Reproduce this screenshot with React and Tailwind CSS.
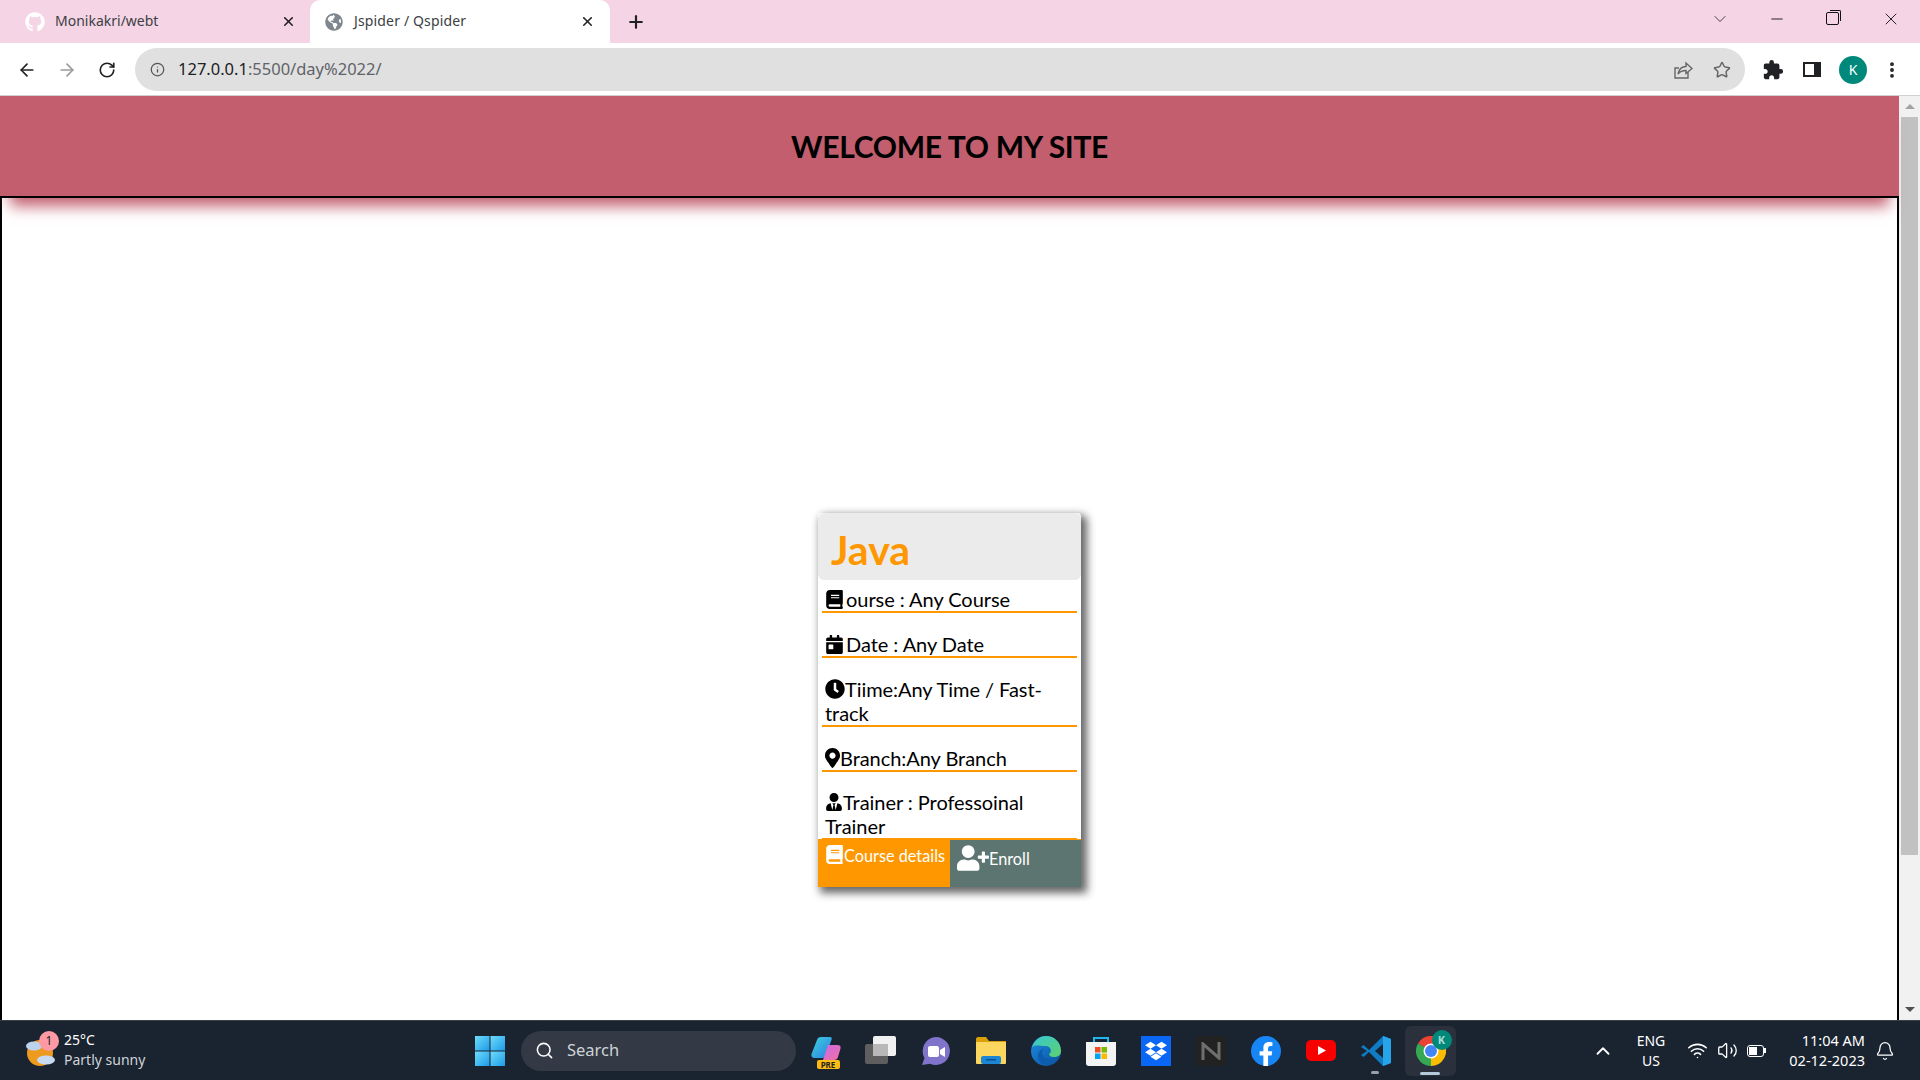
import React from 'react';
import { ArrowLeft, ArrowRight, RotateCw, Info, Star, X, Plus, Minus, ChevronDown, ChevronUp, Search, Wifi, Volume2, Bell, EllipsisVertical } from 'lucide-react';
import { FaGithub, FaGlobeAmericas, FaBook, FaCalendarDay, FaClock, FaMapMarkerAlt, FaUserTie, FaUserPlus, FaDropbox, FaFacebookF } from 'react-icons/fa';
import { MdExtension } from 'react-icons/md';

const Tab = ({ active, icon, title }) => (
  <div className={`flex items-center h-[43px] ${active ? 'w-[300px] bg-white rounded-t-[10px] pl-[15px] pr-[15px]' : 'w-[310px] pl-[25px] pr-[14px]'}`}>
    {icon}
    <span className={`mb-[2px] flex-1 text-[14px] text-[#3c4043] font-['Noto_Sans',sans-serif] ${active ? 'ml-[11px] tracking-[0.15px]' : 'ml-[10px]'}`}>{title}</span>
    <X size={15} strokeWidth={2.6} className="text-[#222]" />
  </div>
);

const TabStrip = () => (
  <div className="flex items-center h-[43px] bg-[#f5d5e5]">
    <Tab title="Monikakri/webt" icon={<FaGithub size={20} className="text-white" />} />
    <Tab active title="Jspider / Qspider" icon={<FaGlobeAmericas size={18} className="text-[#7f868f]" />} />
    <Plus size={20} strokeWidth={2.6} className="ml-[16px] text-[#222]" />
    <div className="flex-1" />
    <div className="flex items-center mb-[6px]">
      <ChevronDown size={20} strokeWidth={1} className="text-[#222] mr-[38px]" />
      <Minus size={18} strokeWidth={1.2} className="text-[#111] mr-[40px]" />
      <div className="relative w-[13px] h-[13px] mr-[42px] border border-[#111] rounded-[2px]">
        <div className="absolute -top-[3px] -right-[3px] w-[11px] h-[11px] border-t border-r border-[#111] rounded-tr-[2px]" />
      </div>
      <X size={20} strokeWidth={1.1} className="text-[#111] mr-[19px]" />
    </div>
  </div>
);

const Toolbar = () => (
  <div className="flex items-center h-[53px] pt-[1px] bg-white border-b border-[#d0d0d0]">
    <ArrowLeft size={20} strokeWidth={2} className="ml-[17px] text-[#222]" />
    <ArrowRight size={20} strokeWidth={2} className="ml-[20px] text-[#9a9a9a]" />
    <RotateCw size={18} strokeWidth={2.2} className="ml-[21px] text-[#222]" />
    <div className="ml-[19px] flex items-center w-[1610px] h-[43px] rounded-full bg-[#e0e0e0]">
      <Info size={15} strokeWidth={2} className="ml-[15px] text-[#555]" />
      <span className="ml-[13px] flex-1 text-[16.500px] font-['Noto_Sans',sans-serif] text-[#5f6368]">
        <span className="text-[#202124]">127.0.0.1</span>:5500/day%2022/
      </span>
      <svg width="20" height="20" viewBox="0 0 20 20" fill="none" stroke="#666" strokeWidth="1.4" className="mr-[20px]">
        <path d="M15 12v6H2V8h4" />
        <path d="M5 14c1-5 4-7.500 8-7.500V3l6 5.500-6 5V10.500c-3 0-6 1-8 3.500z" />
      </svg>
      <Star size={18} strokeWidth={2} className="mr-[14px] text-[#666]" />
    </div>
    <MdExtension size={22} className="ml-[17px] text-[#202124]" />
    <div className="ml-[19px] w-[18px] h-[15px] border-[2.5px] border-[#202124] border-r-[7px] bg-white" />
    <div className="ml-[18px] w-[28px] h-[28px] rounded-full bg-[#00897b] text-white text-[14px] flex items-center justify-center font-['Noto_Sans',sans-serif]">K</div>
    <EllipsisVertical size={20} strokeWidth={2.6} className="ml-[15px] text-[#202124]" />
  </div>
);

const Row = ({ icon, children }) => (
  <div className="mx-[4px] mb-[19px] pl-[3px] border-b-2 border-[#ff9800] text-[20px] leading-[24px] text-black tracking-[-0.05px]">
    {icon}{children}
  </div>
);

const Card = () => (
  <div className="mx-auto w-[263px] h-[374px] rounded-t-[4px] bg-white shadow-[4px_4px_9px_2px_#666] overflow-hidden font-['Lato',sans-serif]">
    <div className="h-[67px] pl-[13px] pt-[13px] bg-[#ebebeb] rounded-[6px] text-[41px] leading-[48px] font-bold text-[#ff9800]">Java</div>
    <div className="mt-[7px] h-[252px]">
      <Row icon={<FaBook size={19} className="inline align-[-2px] mr-[2px]" />}>ourse : Any Course</Row>
      <Row icon={<FaCalendarDay size={19} className="inline align-[-2px] mr-[2px]" />}>Date : Any Date</Row>
      <Row icon={<FaClock size={20} className="inline align-[-2px]" />}>Tiime:Any Time / Fast-track</Row>
      <Row icon={<FaMapMarkerAlt className="inline w-[15px] h-[20px] align-[-2px]" />}>Branch:Any Branch</Row>
      <div className="-mt-[1px]">
        <Row icon={<FaUserTie size={18} className="inline align-[-1px]" />}>Trainer : Professoinal Trainer</Row>
      </div>
    </div>
    <div className="flex h-[48px] text-white relative">
      <div className="w-[132px] bg-[#ff9800] pl-[7px] pt-[6px] text-[16.300px] leading-[20px] whitespace-nowrap">
        <FaBook size={19} className="inline align-[-2px]" />Course details
      </div>
      <div className="flex-1 bg-[#5c7570] border-t border-[#ff9800] pl-[7px] pt-[2px] text-[16.300px] leading-[20px] whitespace-nowrap">
        <FaUserPlus size={32} className="inline align-[-9px]" />Enroll
      </div>
    </div>
  </div>
);

const Scrollbar = () => (
  <div className="flex flex-col items-center w-[21px] bg-[#f1f1f1]">
    <div className="mt-[8px] w-0 h-0 border-x-[5px] border-x-transparent border-b-[5px] border-b-[#a3a3a3]" />
    <div className="mt-[8px] w-[17px] h-[738px] bg-[#c1c1c1]" />
    <div className="flex-1" />
    <div className="mb-[8px] w-0 h-0 border-x-[5px] border-x-transparent border-t-[5px] border-t-[#505050]" />
  </div>
);

const Page = () => (
  <div className="flex flex-1 min-h-0">
    <div className="flex flex-col flex-1 min-w-0">
      <div className="relative z-10 flex items-center justify-center h-[102px] bg-[#c25e6e] border-b-2 border-black shadow-[0_18px_14px_-10px_#c25e6e]">
        <h1 className="text-[30px] font-bold font-['Lato',sans-serif] text-black tracking-[-0.3px]">WELCOME TO MY SITE</h1>
      </div>
      <div className="flex-1 pt-[315px] border-x-2 border-black bg-white">
        <Card />
      </div>
    </div>
    <Scrollbar />
  </div>
);

const Tile = ({ active, children }) => (
  <div className="relative flex items-center justify-center w-[55px] h-[50px]">
    {active && <div className="absolute inset-x-[2px] inset-y-0 rounded-[6px] bg-[#2a303c]" />}
    <div className="relative">{children}</div>
    {active && <div className="absolute bottom-[1px] left-[17px] w-[20px] h-[3px] rounded-full bg-[#b4cadb]" />}
  </div>
);

const WeatherIcon = () => (
  <div className="relative w-[34px] h-[36px]">
    <svg width="32" height="34" viewBox="0 0 32 34" className="absolute left-0 top-[2px]">
      <circle cx="15" cy="18" r="13" fill="#ee9a1f" />
      <ellipse cx="9" cy="11" rx="8" ry="4.500" fill="#bcd3ee" />
      <ellipse cx="21" cy="25" rx="9" ry="4.500" fill="#c8daf2" />
    </svg>
    <div className="absolute left-[14px] -top-[2px] w-[20px] h-[20px] rounded-full bg-[#ff9aa5] text-[#222] text-[12px] flex items-center justify-center">1</div>
  </div>
);

const WindowsLogo = () => (
  <svg width="30" height="30" viewBox="0 0 30 30">
    <defs>
      <linearGradient id="winA" x1="0" y1="0" x2="1" y2="1">
        <stop offset="0" stopColor="#6fdcfb" />
        <stop offset="1" stopColor="#1d9be8" />
      </linearGradient>
    </defs>
    <rect x="0" y="0" width="14.500" height="14.500" fill="url(#winA)" />
    <rect x="15.500" y="0" width="14.500" height="14.500" fill="url(#winA)" />
    <rect x="0" y="15.500" width="14.500" height="14.500" fill="url(#winA)" />
    <rect x="15.500" y="15.500" width="14.500" height="14.500" fill="url(#winA)" />
  </svg>
);

const Copilot = () => (
  <div className="relative w-[30px] h-[30px]">
    <svg width="30" height="26" viewBox="0 0 30 26">
      <defs>
        <linearGradient id="copA" x1="0" y1="0" x2="1" y2="1">
          <stop offset="0" stopColor="#3fd0e0" />
          <stop offset="1" stopColor="#2b7fe0" />
        </linearGradient>
        <linearGradient id="copB" x1="0" y1="0" x2="1" y2="1">
          <stop offset="0" stopColor="#c76ce8" />
          <stop offset="1" stopColor="#f36fa0" />
        </linearGradient>
      </defs>
      <path d="M10 1h9c2 0 2 1 1.500 3l-6 16c-.500 1-1.500 2-3 2H4c-3 0-4-2-3.500-4L6 4c.500-2 2-3 4-3z" fill="url(#copA)" />
      <path d="M17 9h9c3 0 4 1 3.500 3.500L27 21c-.500 2-2 3-4 3H12z" fill="url(#copB)" />
    </svg>
    <div className="absolute left-[6px] -bottom-[3px] w-[23px] h-[9px] rounded-[2px] bg-[#fbbd14] text-[8px] leading-[9px] font-bold text-center text-[#222] font-['Noto_Sans',sans-serif]">PRE</div>
  </div>
);

const TaskView = () => (
  <svg width="32" height="30" viewBox="0 0 32 30">
    <rect x="0" y="8" width="23" height="20" rx="2" fill="#5e5e5e" />
    <rect x="8" y="0" width="23" height="20" rx="2" fill="#f1f1f1" />
    <rect x="8" y="8" width="15" height="12" fill="#b8b8b8" />
  </svg>
);

const MeetIcon = () => (
  <svg width="30" height="30" viewBox="0 0 30 30">
    <path d="M15 1a14 14 0 1 1-6 26.700L1 29l2.500-7A14 14 0 0 1 15 1z" fill="#7f74c9" />
    <rect x="7" y="10" width="11" height="11" rx="2" fill="#fff" />
    <path d="M19 14l5-3v10l-5-3z" fill="#fff" />
  </svg>
);

const FolderIcon = () => (
  <svg width="30" height="27" viewBox="0 0 30 27">
    <path d="M0 2c0-1 1-2 2-2h8l3 4h17v4H0z" fill="#d9a009" />
    <rect x="0" y="5" width="30" height="22" rx="1" fill="#fcd75f" />
    <rect x="5" y="19" width="20" height="8" rx="2" fill="#1b87d4" />
    <rect x="10" y="22" width="10" height="1.500" fill="#0a4f8f" />
  </svg>
);

const EdgeIcon = () => (
  <svg width="30" height="30" viewBox="0 0 30 30">
    <defs>
      <linearGradient id="edgeA" x1="0" y1="0" x2="1" y2="1">
        <stop offset="0" stopColor="#36c8d2" />
        <stop offset="1" stopColor="#5fd16d" />
      </linearGradient>
      <linearGradient id="edgeB" x1="0" y1="0" x2="1" y2="1">
        <stop offset="0" stopColor="#1d8ee0" />
        <stop offset="1" stopColor="#0c4f9e" />
      </linearGradient>
    </defs>
    <circle cx="15" cy="15" r="15" fill="url(#edgeB)" />
    <path d="M1 12C3 4 9 0 15 0c8 0 15 6 15 15 0 4-3 6-7 6-3 0-5-1-5-3 3-1 3-8-4-8C8 10 3 8 1 12z" fill="url(#edgeA)" />
    <path d="M13 13c-3 2-3 9 5 10 4 .500 7-1 9-3-3 6-8 9-12 9 -5 0-8-5-8-9 0-4 3-7 6-7z" fill="#0c5db0" />
  </svg>
);

const StoreIcon = () => (
  <svg width="30" height="30" viewBox="0 0 30 30">
    <path d="M8 6V2h14v4" fill="none" stroke="#1fb7ee" strokeWidth="2" />
    <path d="M0 6h30v21c0 2-1 3-3 3H3c-2 0-3-1-3-3z" fill="#f4f4f4" />
    <rect x="9" y="11" width="5.500" height="5.500" fill="#f25022" />
    <rect x="15.500" y="11" width="5.500" height="5.500" fill="#7fba00" />
    <rect x="9" y="17.500" width="5.500" height="5.500" fill="#00a4ef" />
    <rect x="15.500" y="17.500" width="5.500" height="5.500" fill="#ffb900" />
  </svg>
);

const NotionIcon = () => (
  <div className="w-[30px] h-[30px] rounded-[3px] bg-[#222222] flex items-center justify-center">
    <svg width="20" height="18" viewBox="0 0 20 18" fill="none" stroke="#6f6f6f" strokeWidth="3">
      <path d="M2 18V2l16 14V0" />
    </svg>
  </div>
);

const YoutubeIcon = () => (
  <svg width="30" height="21" viewBox="0 0 30 21">
    <rect width="30" height="21" rx="5" fill="#f70000" />
    <path d="M12 6l8 4.500-8 4.500z" fill="#fff" />
  </svg>
);

const VsCodeIcon = () => (
  <svg width="30" height="30" viewBox="0 0 30 30">
    <path d="M22 0l8 3v24l-8 3L8 16 2.500 21 0 19l6-4-6-4 2.500-2L8 14z" fill="#0f7cc4" />
    <path d="M22 0l8 3v24l-8 3z" fill="#27a5ea" />
    <path d="M22 8l-8 7 8 7z" fill="#1a2330" />
  </svg>
);

const ChromeIcon = () => (
  <div className="relative w-[30px] h-[30px] mt-[1px]">
    <svg width="30" height="30" viewBox="0 0 30 30">
      <path d="M15 15L2 7.500A15 15 0 0 1 28 7.500z" fill="#ea4335" />
      <path d="M15 15L28 7.500A15 15 0 0 1 15 30z" fill="#fbbc04" />
      <path d="M15 15L15 30A15 15 0 0 1 2 7.500z" fill="#34a853" />
      <circle cx="15" cy="15" r="7.500" fill="#fff" />
      <circle cx="15" cy="15" r="6" fill="#4285f4" />
    </svg>
    <div className="absolute -top-[6px] -right-[6px] w-[20px] h-[20px] rounded-full bg-[#00897b] text-[#a8dcd4] text-[11px] font-bold flex items-center justify-center">K</div>
  </div>
);

const Taskbar = () => (
  <div className="flex items-center h-[60px] bg-[#1a2330] border-t border-[#3a3f48] text-white font-['Noto_Sans',sans-serif]">
    <div className="flex items-center w-[475px] pl-[25px]">
      <WeatherIcon />
      <div className="ml-[5px] mb-[2px] text-[14px] leading-[20px]">
        <div>25°C</div>
        <div className="text-[#cfd3d8]">Partly sunny</div>
      </div>
    </div>
    <WindowsLogo />
    <div className="ml-[16px] flex items-center w-[275px] h-[40px] rounded-full bg-[#333a45] pl-[14px] text-[#cfd3d8] text-[16.500px]">
      <Search size={19} strokeWidth={2} className="text-white" />
      <span className="ml-[13px]">Search</span>
    </div>
    <div className="flex ml-[2px]">
      <Tile><Copilot /></Tile>
      <Tile><TaskView /></Tile>
      <Tile><MeetIcon /></Tile>
      <Tile><FolderIcon /></Tile>
      <Tile><EdgeIcon /></Tile>
      <Tile><StoreIcon /></Tile>
      <Tile><div className="w-[30px] h-[30px] bg-[#0a66f5] flex items-center justify-center"><FaDropbox size={22} className="text-white" /></div></Tile>
      <Tile><NotionIcon /></Tile>
      <Tile><div className="w-[30px] h-[30px] rounded-full bg-[#1685f5] flex items-end justify-center"><FaFacebookF size={24} className="text-white" /></div></Tile>
      <Tile><YoutubeIcon /></Tile>
      <Tile>
        <VsCodeIcon />
        <div className="absolute -bottom-[8px] left-[10px] w-[8px] h-[3px] rounded-full bg-[#9aa0a6]" />
      </Tile>
      <Tile active><ChromeIcon /></Tile>
    </div>
    <ChevronUp size={22} strokeWidth={2} className="ml-[134px] text-white" />
    <div className="ml-[12px] w-[50px] text-center text-[14px] leading-[20px]">
      <div>ENG</div>
      <div>US</div>
    </div>
    <Wifi size={21} strokeWidth={1.8} className="ml-[11px]" />
    <Volume2 size={21} strokeWidth={1.5} className="ml-[9px]" />
    <div className="ml-[9px] flex items-center">
      <div className="w-[17px] h-[12px] rounded-[3px] border border-white p-[1px]"><div className="w-[8px] h-full bg-white" /></div>
      <div className="w-[2px] h-[5px] bg-white" />
    </div>
    <div className="w-[94px] ml-[5px] mb-[2px] text-right text-[14.500px] leading-[20px]">
      <div>11:04 AM</div>
      <div>02-12-2023</div>
    </div>
    <Bell size={20} strokeWidth={1.5} className="ml-[10px]" />
  </div>
);

const App = () => (
  <div className="flex flex-col w-[1920px] h-[1080px] overflow-hidden bg-white">
    <TabStrip />
    <Toolbar />
    <Page />
    <Taskbar />
  </div>
);

export default App;
